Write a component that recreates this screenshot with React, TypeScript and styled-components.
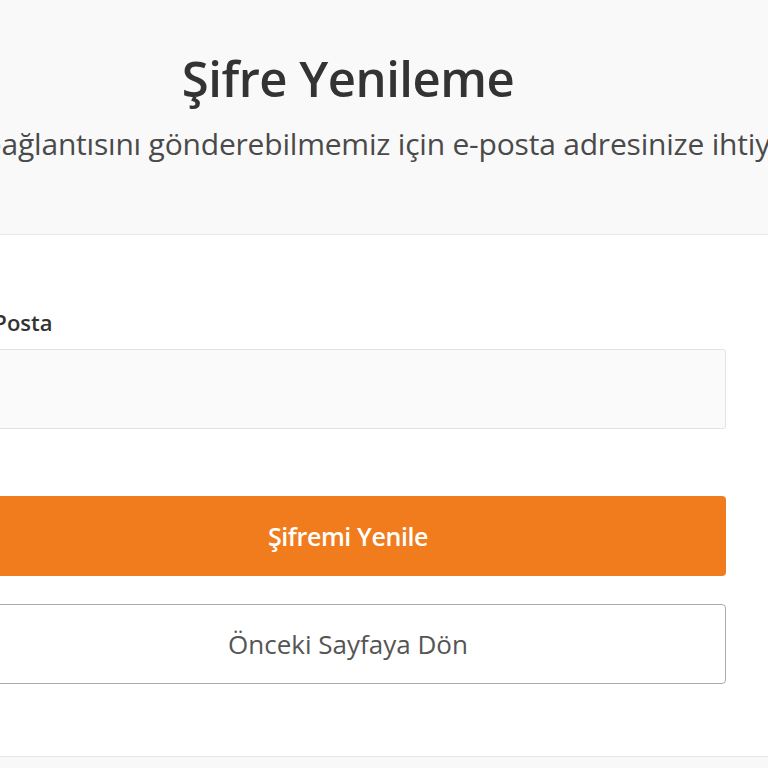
import React from "react";
import styled, { createGlobalStyle } from "styled-components";

const Global = createGlobalStyle`
  html, body { margin: 0; padding: 0; background: #ffffff; overflow: hidden; }
  body { font-family: "Open Sans", "Liberation Sans", sans-serif; }
  * { box-sizing: border-box; }
`;

const Page = styled.div`
  width: 840px;
  margin-left: -72px;
  display: flex;
  flex-direction: column;
`;

const Header = styled.header`
  height: 235px;
  background: #f9f9f9;
  border-bottom: 1px solid #e9e9e9;
  display: flex;
  flex-direction: column;
  align-items: center;
  padding-top: 47px;
`;

const Title = styled.h1`
  margin: 0;
  font-size: 49px;
  line-height: 62px;
  font-weight: 600;
  color: #333333;
  letter-spacing: -0.5px;
`;

const Subtitle = styled.p`
  margin: 16px 0 0;
  font-size: 30px;
  line-height: 38px;
  font-weight: 400;
  color: #4a4a4a;
  white-space: nowrap;
  letter-spacing: -0.2px;
`;

const Main = styled.main`
  height: 522px;
  border-bottom: 1px solid #e6e6e6;
  display: flex;
  justify-content: center;
  padding-top: 72px;
`;

const Form = styled.form`
  width: 756px;
  display: flex;
  flex-direction: column;
`;

const Label = styled.label`
  font-size: 22px;
  line-height: 30px;
  font-weight: 600;
  color: #333333;
  margin-bottom: 12px;
  padding-left: 4px;
`;

const Input = styled.input`
  height: 80px;
  background: #fafafa;
  border: 1px solid #e3e3e3;
  border-radius: 3px;
  font: inherit;
  font-size: 22px;
  padding: 0 20px;
  outline: none;
  margin-bottom: 67px;
`;

const Button = styled.button<{ $variant: "primary" | "secondary" }>`
  height: 80px;
  border-radius: 4px;
  font-family: inherit;
  font-size: ${(p) => (p.$variant === "primary" ? "25px" : "26px")};
  letter-spacing: ${(p) => (p.$variant === "primary" ? "-0.4px" : "0")};
  cursor: pointer;
  display: flex;
  align-items: center;
  justify-content: center;
  background: ${(p) => (p.$variant === "primary" ? "#f17c1e" : "#ffffff")};
  color: ${(p) => (p.$variant === "primary" ? "#ffffff" : "#555555")};
  border: ${(p) => (p.$variant === "primary" ? "none" : "1px solid #ababab")};
  font-weight: ${(p) => (p.$variant === "primary" ? 600 : 400)};
  margin-bottom: 28px;
`;

const Footer = styled.div`
  height: 40px;
  background: #f8f8f8;
`;

export default function App() {
  return (
    <>
      <Global />
      <Page>
        <Header>
          <Title>Şifre Yenileme</Title>
          <Subtitle>
            Şifre yenileme bağlantısını gönderebilmemiz için e-posta adresinize ihtiyacımız var.
          </Subtitle>
        </Header>
        <Main>
          <Form onSubmit={(e) => e.preventDefault()}>
            <Label htmlFor="email">E-Posta</Label>
            <Input id="email" type="email" />
            <Button type="submit" $variant="primary">Şifremi Yenile</Button>
            <Button type="button" $variant="secondary">Önceki Sayfaya Dön</Button>
          </Form>
        </Main>
        <Footer />
      </Page>
    </>
  );
}
